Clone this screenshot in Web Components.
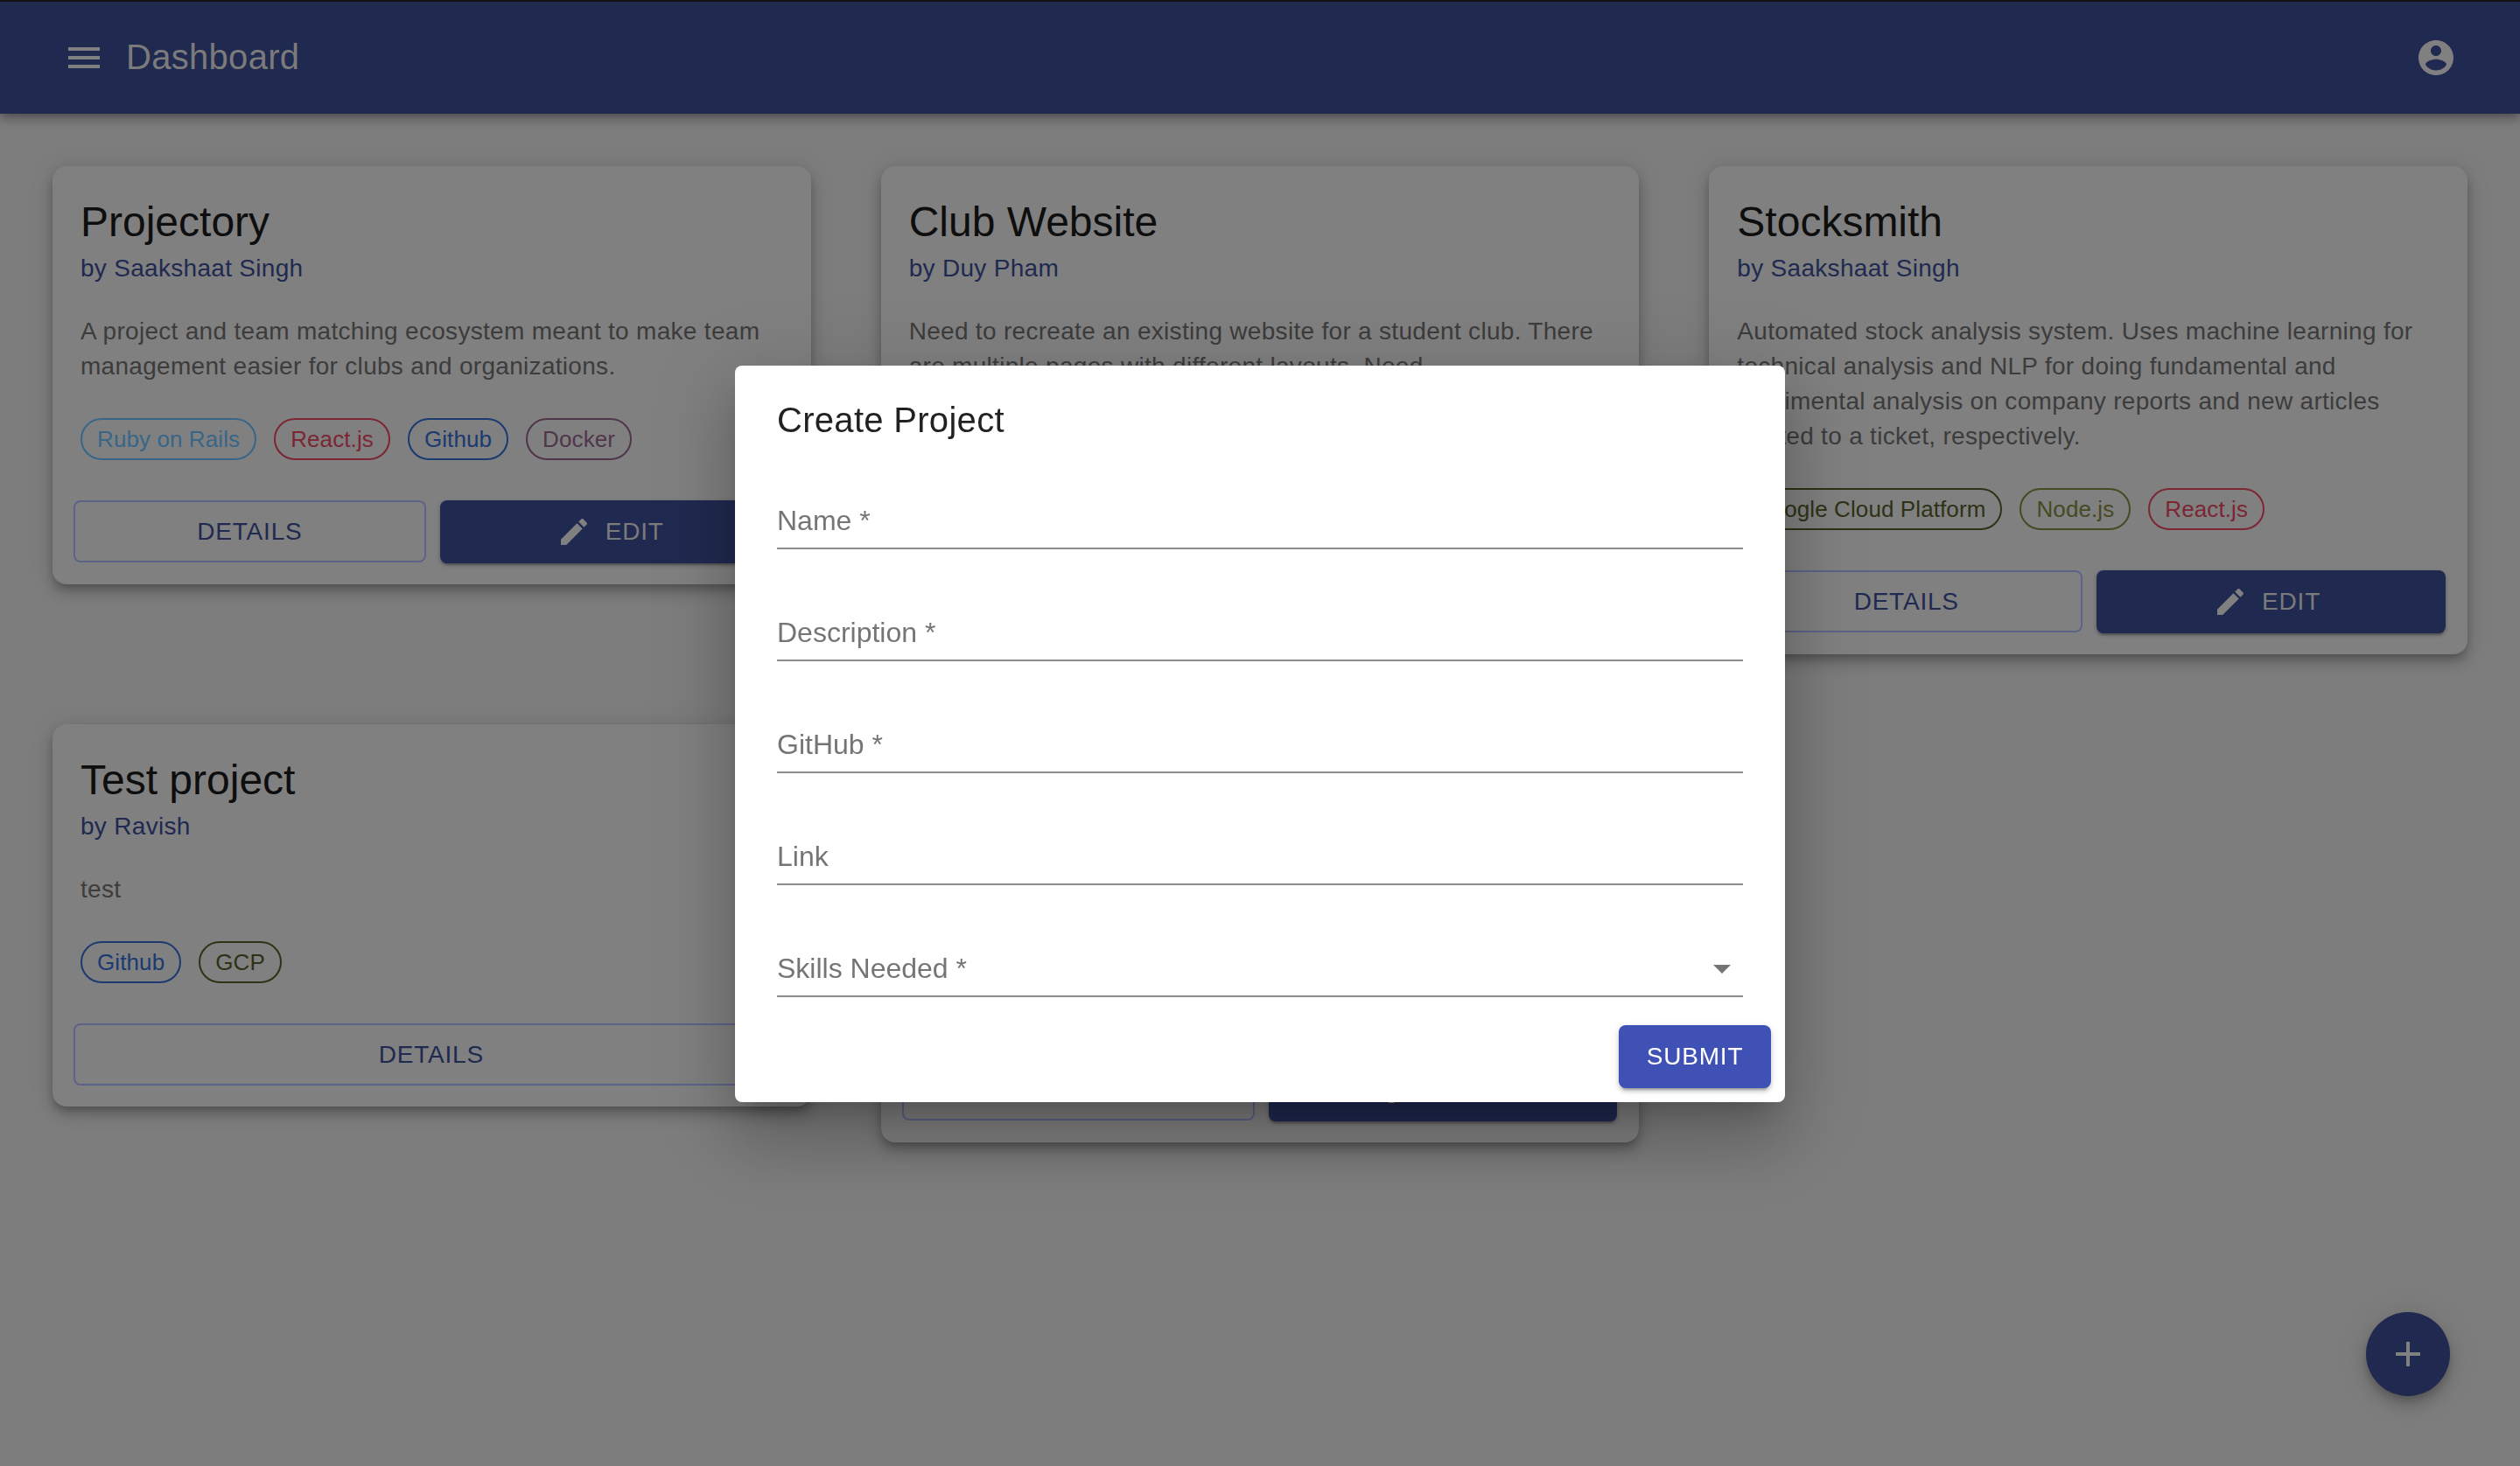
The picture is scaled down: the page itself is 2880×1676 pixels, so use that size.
<!DOCTYPE html>
<html>
<head>
<meta charset="utf-8">
<title>Dashboard</title>
<style>
  html, body { margin: 0; padding: 0; }
  body {
    width: 2880px;
    height: 1676px;
    overflow: hidden;
    background: #7d7d7d;
    font-family: "Liberation Sans", Arial, sans-serif;
    color: #0e0e0e;
  }
</style>
</head>
<body>
<app-bar title="Dashboard"></app-bar>

<project-grid>
  <project-card title="Projectory" author="Saakshaat Singh" edit>
    A project and team matching ecosystem meant to make team management easier for clubs and organizations.
    <skill-chip slot="chips" tone="ruby">Ruby on Rails</skill-chip>
    <skill-chip slot="chips" tone="react">React.js</skill-chip>
    <skill-chip slot="chips" tone="github">Github</skill-chip>
    <skill-chip slot="chips" tone="docker">Docker</skill-chip>
  </project-card>

  <project-card class="tall" title="Club Website" author="Duy Pham" edit>
    Need to recreate an existing website for a student club. There are multiple pages with different layouts. Need
  </project-card>

  <project-card title="Stocksmith" author="Saakshaat Singh" edit>
    Automated stock analysis system. Uses machine learning for technical analysis and NLP for doing fundamental and sentimental analysis on company reports and new articles related to a ticket, respectively.
    <skill-chip slot="chips" tone="gcp">Google Cloud Platform</skill-chip>
    <skill-chip slot="chips" tone="node">Node.js</skill-chip>
    <skill-chip slot="chips" tone="react">React.js</skill-chip>
  </project-card>

  <project-card title="Test project" author="Ravish">
    test
    <skill-chip slot="chips" tone="github">Github</skill-chip>
    <skill-chip slot="chips" tone="gcp">GCP</skill-chip>
  </project-card>
</project-grid>

<add-fab></add-fab>

<create-dialog heading="Create Project">
  <form-field label="Name" required></form-field>
  <form-field label="Description" required></form-field>
  <form-field label="GitHub" required></form-field>
  <form-field label="Link"></form-field>
  <form-field label="Skills Needed" required select></form-field>
</create-dialog>

<script>
// colours below are the ones seen through the dialog backdrop, not the raw theme ones
const NAVY = '#202950';
const DIM_WHITE = '#808080';

class AppBar extends HTMLElement {
  constructor() {
    super();
    let shadowRoot = this.attachShadow({mode: 'open'});
    shadowRoot.innerHTML = `
      <style>
        :host {
          display: flex;
          align-items: center;
          box-sizing: border-box;
          height: 130px;
          padding: 0 48px;
          background: ${NAVY};
          border-top: 2px solid #111;
          box-shadow: 0 4px 8px -2px rgba(0,0,0,.2), 0 8px 10px 0 rgba(0,0,0,.14), 0 2px 20px 0 rgba(0,0,0,.12);
          position: relative;
          color: ${DIM_WHITE};
        }
        button { all: unset; display: flex; width: 96px; height: 96px; align-items: center; justify-content: center; }
        svg { width: 48px; height: 48px; fill: ${DIM_WHITE}; }
        h1 { flex: 1; margin: 0 0 3px; font-size: 40px; font-weight: 400; line-height: 1.6; letter-spacing: .3px; color: #7b7b7b; }
      </style>
      <button aria-label="menu"><svg viewBox="0 0 24 24"><path d="M3 18h18v-2H3v2zm0-5h18v-2H3v2zm0-7v2h18V6H3z"/></svg></button>
      <h1></h1>
      <button aria-label="account"><svg viewBox="0 0 24 24"><path d="M12 2C6.48 2 2 6.48 2 12s4.48 10 10 10 10-4.48 10-10S17.52 2 12 2zm0 3c1.66 0 3 1.34 3 3s-1.34 3-3 3-3-1.34-3-3 1.34-3 3-3zm0 14.2c-2.5 0-4.71-1.28-6-3.22.03-1.99 4-3.08 6-3.08 1.99 0 5.97 1.09 6 3.08-1.29 1.94-3.5 3.22-6 3.22z"/></svg></button>
    `;
    shadowRoot.querySelector('h1').textContent = this.getAttribute('title');
    this.removeAttribute('title');
  }
}

class ProjectGrid extends HTMLElement {
  constructor() {
    super();
    let shadowRoot = this.attachShadow({mode: 'open'});
    shadowRoot.innerHTML = `
      <style>
        :host {
          display: grid;
          grid-template-columns: repeat(3, 1fr);
          grid-template-rows: 558px auto;
          gap: 80px;
          align-items: start;
          padding: 60px 60px 0;
        }
        ::slotted(.tall) { grid-row: span 2; height: 1116px; }
      </style>
      <slot></slot>
    `;
  }
}

class ProjectCard extends HTMLElement {
  constructor() {
    super();
    let shadowRoot = this.attachShadow({mode: 'open'});
    let edit = this.hasAttribute('edit');
    shadowRoot.innerHTML = `
      <style>
        :host {
          display: flex;
          flex-direction: column;
          box-sizing: border-box;
          padding: 32px 24px 24px;
          background: ${DIM_WHITE};
          border-radius: 16px;
          box-shadow: 0 6px 10px -2px rgba(0,0,0,.2), 0 10px 16px 0 rgba(0,0,0,.14), 0 2px 28px 0 rgba(0,0,0,.12);
        }
        .content { display: flex; flex-direction: column; flex: 1; padding: 0 8px; }
        h2 { margin: 0; font-size: 48px; font-weight: 400; line-height: 64px; color: #0e0e0e; }
        .by { margin-top: 1px; font-size: 28px; line-height: 40px; letter-spacing: .3px; color: ${NAVY}; }
        .desc { margin-top: 32px; font-size: 28px; line-height: 40px; letter-spacing: .3px; color: #3c3c3c; }
        .chips { display: flex; gap: 20px; margin-top: 39px; }
        .actions { display: flex; gap: 16px; margin-top: 46px; margin-right: 1px; }
        .btn {
          flex: 1;
          display: flex;
          align-items: center;
          justify-content: center;
          gap: 16px;
          box-sizing: border-box;
          height: 72px;
          border-radius: 8px;
          font-size: 28px;
          letter-spacing: .8px;
        }
        .outlined { border: 2px solid #5c6388; color: ${NAVY}; height: 71px; }
        .contained { background: ${NAVY}; color: #7b7b7b; box-shadow: 0 3px 2px -1px rgba(0,0,0,.2), 0 2px 4px 0 rgba(0,0,0,.14), 0 2px 6px 0 rgba(0,0,0,.12); }
        svg { width: 40px; height: 40px; margin-left: -10px; fill: ${DIM_WHITE}; }
      </style>
      <div class="content">
        <h2></h2>
        <div class="by"></div>
        <div class="desc"><slot></slot></div>
        <div class="chips"><slot name="chips"></slot></div>
      </div>
      <div class="actions">
        <div class="btn outlined">DETAILS</div>
        ${edit ? `<div class="btn contained"><svg viewBox="0 0 24 24"><path d="M3 17.25V21h3.75L17.81 9.94l-3.75-3.75L3 17.25zM20.71 7.04c.39-.39.39-1.02 0-1.41l-2.34-2.34c-.39-.39-1.02-.39-1.41 0l-1.83 1.83 3.75 3.75 1.83-1.83z"/></svg>EDIT</div>` : ''}
      </div>
    `;
    shadowRoot.querySelector('h2').textContent = this.getAttribute('title');
    shadowRoot.querySelector('.by').textContent = 'by ' + this.getAttribute('author');
    this.removeAttribute('title');
    if (!this.querySelector('[slot=chips]')) {
      shadowRoot.querySelector('.chips').style.display = 'none';
    }
  }
}

const CHIP_TONES = {
  ruby: '#386688',
  react: '#7c2634',
  github: '#1a3a70',
  docker: '#50364b',
  gcp: '#2e3216',
  node: '#454a22'
};

class SkillChip extends HTMLElement {
  constructor() {
    super();
    let shadowRoot = this.attachShadow({mode: 'open'});
    let tone = CHIP_TONES[this.getAttribute('tone')] || '#333';
    shadowRoot.innerHTML = `
      <style>
        :host {
          display: inline-flex;
          align-items: center;
          box-sizing: border-box;
          height: 48px;
          padding: 0 17px;
          border: 2px solid ${tone};
          border-radius: 24px;
          color: ${tone};
          font-size: 26px;
          letter-spacing: .1px;
          white-space: nowrap;
        }
      </style>
      <slot></slot>
    `;
  }
}

class AddFab extends HTMLElement {
  constructor() {
    super();
    let shadowRoot = this.attachShadow({mode: 'open'});
    shadowRoot.innerHTML = `
      <style>
        :host {
          position: fixed;
          right: 80px;
          bottom: 80px;
          width: 96px;
          height: 96px;
          display: flex;
          align-items: center;
          justify-content: center;
          border-radius: 50%;
          background: ${NAVY};
          box-shadow: 0 6px 10px -2px rgba(0,0,0,.2), 0 12px 20px 0 rgba(0,0,0,.14), 0 2px 36px 0 rgba(0,0,0,.12);
        }
        svg { width: 48px; height: 48px; fill: ${DIM_WHITE}; }
      </style>
      <svg viewBox="0 0 24 24"><path d="M19 13h-6v6h-2v-6H5v-2h6V5h2v6h6v2z"/></svg>
    `;
  }
}

class CreateDialog extends HTMLElement {
  constructor() {
    super();
    let shadowRoot = this.attachShadow({mode: 'open'});
    shadowRoot.innerHTML = `
      <style>
        :host {
          position: fixed;
          left: 840px;
          top: 418px;
          width: 1200px;
          height: 842px;
          display: flex;
          flex-direction: column;
          box-sizing: border-box;
          background: #fff;
          border-radius: 8px;
          box-shadow: 0 22px 30px -14px rgba(0,0,0,.2), 0 48px 76px 6px rgba(0,0,0,.14), 0 18px 92px 16px rgba(0,0,0,.12);
        }
        h2 { margin: 0; padding: 30px 48px 0; font-size: 40px; font-weight: 400; line-height: 64px; letter-spacing: .3px; color: rgba(0,0,0,.87); }
        .fields { flex: 1; display: flex; flex-direction: column; gap: 40px; padding: 28px 48px 0; }
        .actions { display: flex; justify-content: flex-end; padding: 16px; }
        .submit {
          display: flex;
          align-items: center;
          justify-content: center;
          width: 174px;
          height: 72px;
          border-radius: 8px;
          background: #3f51b5;
          color: #fff;
          font-size: 28px;
          letter-spacing: .8px;
          box-shadow: 0 6px 2px -4px rgba(0,0,0,.2), 0 4px 4px 0 rgba(0,0,0,.14), 0 2px 10px 0 rgba(0,0,0,.12);
        }
      </style>
      <h2></h2>
      <div class="fields"><slot></slot></div>
      <div class="actions"><div class="submit">SUBMIT</div></div>
    `;
    shadowRoot.querySelector('h2').textContent = this.getAttribute('heading');
  }
}

class FormField extends HTMLElement {
  constructor() {
    super();
    let shadowRoot = this.attachShadow({mode: 'open'});
    let label = this.getAttribute('label');
    if (this.hasAttribute('required')) label += ' *';
    shadowRoot.innerHTML = `
      <style>
        :host {
          display: flex;
          align-items: center;
          justify-content: space-between;
          box-sizing: border-box;
          height: 88px;
          padding-top: 24px;
          border-bottom: 2px solid #8c8c8c;
          font-size: 32px;
          line-height: 56px;
          color: #757575;
        }
        svg { width: 48px; height: 48px; fill: #757575; }
      </style>
      <span></span>
      ${this.hasAttribute('select') ? '<svg viewBox="0 0 24 24"><path d="M7 10l5 5 5-5z"/></svg>' : ''}
    `;
    shadowRoot.querySelector('span').textContent = label;
  }
}

customElements.define('app-bar', AppBar);
customElements.define('project-grid', ProjectGrid);
customElements.define('project-card', ProjectCard);
customElements.define('skill-chip', SkillChip);
customElements.define('add-fab', AddFab);
customElements.define('create-dialog', CreateDialog);
customElements.define('form-field', FormField);
</script>
</body>
</html>
